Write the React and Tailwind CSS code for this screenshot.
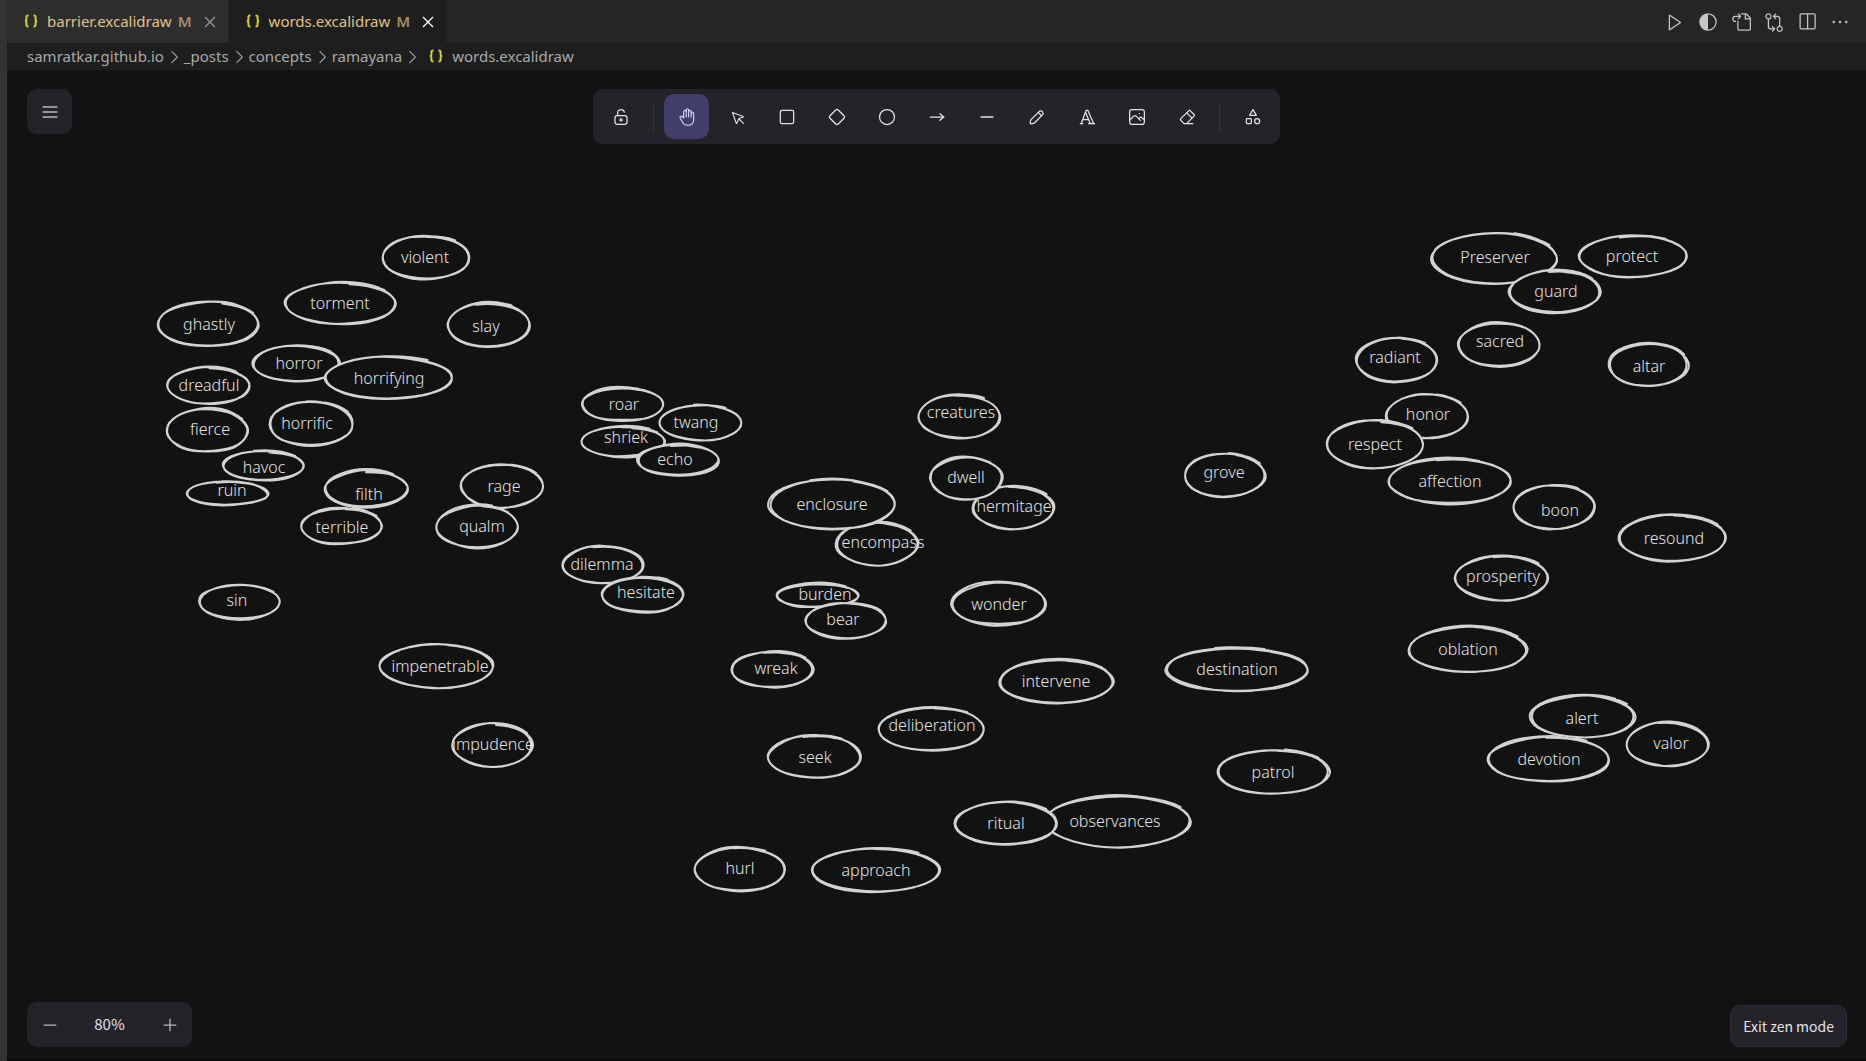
import {
  VscChevronRight,
  VscClose,
  VscColorMode,
  VscEllipsis,
  VscGitCompare,
  VscGoToFile,
  VscPlay,
  VscSplitHorizontal,
} from "react-icons/vsc";

// Position of the canvas' top-left corner in scene coordinates.
const ORIGIN = { x: 7, y: 70 };

// word, left, right, top, bottom of its ellipse, then the label's centre
const WORDS = [
  ["violent", 382, 469, 236, 279, 425, 257],
  ["torment", 285, 396, 283, 324, 340, 303],
  ["ghastly", 158, 259, 302, 346, 209, 324],
  ["slay", 447, 529, 303, 347, 486, 326],
  ["horror", 253, 339, 346, 382, 299, 363],
  ["horrifying", 325, 452, 357, 399, 389, 378],
  ["dreadful", 167, 249, 368, 404, 209, 385],
  ["fierce", 167, 248, 409, 452, 210, 429],
  ["horrific", 270, 353, 402, 446, 307, 423],
  ["havoc", 223, 304, 451, 480, 264, 467],
  ["ruin", 187, 268, 482, 505, 232, 490],
  ["filth", 325, 407, 471, 507, 369, 494],
  ["terrible", 301, 382, 508, 544, 342, 527],
  ["rage", 461, 543, 465, 508, 504, 486],
  ["qualm", 436, 517, 506, 548, 482, 526],
  ["dilemma", 562, 643, 547, 584, 602, 564],
  ["hesitate", 602, 684, 577, 612, 646, 592],
  ["sin", 199, 280, 585, 619, 237, 600],
  ["impenetrable", 380, 494, 645, 688, 440, 666],
  ["impudence", 452, 532, 724, 766, 493, 744],
  ["roar", 582, 664, 388, 421, 624, 404],
  ["twang", 660, 741, 405, 440, 696, 422],
  ["shriek", 581, 664, 427, 457, 626, 437],
  ["echo", 638, 719, 445, 475, 675, 459],
  ["encompass", 836, 918, 523, 565, 883, 542],
  ["enclosure", 769, 895, 480, 529, 832, 504],
  ["creatures", 919, 1001, 395, 438, 961, 412],
  ["hermitage", 973, 1054, 487, 529, 1014, 506],
  ["dwell", 930, 1002, 457, 499, 966, 477],
  ["burden", 777, 858, 584, 607, 825, 594],
  ["bear", 805, 886, 603, 638, 843, 619],
  ["wonder", 952, 1046, 583, 625, 999, 604],
  ["wreak", 731, 813, 652, 688, 776, 668],
  ["seek", 768, 860, 736, 778, 815, 757],
  ["deliberation", 879, 985, 708, 751, 932, 725],
  ["intervene", 1000, 1113, 660, 703, 1056, 681],
  ["observances", 1045, 1190, 796, 847, 1115, 821],
  ["ritual", 955, 1057, 802, 844, 1006, 823],
  ["hurl", 695, 785, 848, 891, 740, 868],
  ["approach", 812, 940, 849, 892, 876, 870],
  ["grove", 1184, 1265, 454, 497, 1224, 472],
  ["honor", 1386, 1468, 395, 438, 1428, 414],
  ["respect", 1327, 1424, 421, 468, 1375, 444],
  ["affection", 1389, 1511, 459, 504, 1450, 481],
  ["boon", 1513, 1594, 485, 529, 1560, 510],
  ["resound", 1619, 1726, 515, 561, 1674, 538],
  ["prosperity", 1455, 1548, 556, 600, 1503, 576],
  ["oblation", 1409, 1527, 627, 672, 1468, 649],
  ["destination", 1166, 1308, 648, 691, 1237, 669],
  ["devotion", 1488, 1609, 737, 782, 1549, 759],
  ["alert", 1531, 1635, 696, 738, 1582, 718],
  ["valor", 1627, 1708, 723, 766, 1671, 743],
  ["patrol", 1217, 1329, 750, 794, 1273, 772],
  ["Preserver", 1432, 1557, 233, 283, 1495, 257],
  ["protect", 1579, 1687, 236, 277, 1632, 256],
  ["guard", 1510, 1600, 271, 313, 1556, 291],
  ["sacred", 1458, 1540, 323, 366, 1500, 341],
  ["radiant", 1356, 1437, 338, 382, 1395, 357],
  ["altar", 1609, 1688, 344, 386, 1649, 366],
];

const PAD = 6;

function seeded(seed) {
  let s = seed * 7919 + 17;
  return () => {
    s = (s * 48271) % 2147483647;
    return s / 2147483647;
  };
}

// One hand-drawn pass round an ellipse that starts near the top and overshoots its start.
function sketchPass(rand, cx, cy, rx, ry) {
  const jitter = (amount) => (rand() - 0.5) * 2 * amount;
  const steps = 9;
  const start = -Math.PI / 2 + jitter(0.35);
  const points = [];
  const dx = jitter(0.6);
  const dy = jitter(0.5);
  for (let i = -1; i <= steps + 2; i++) {
    const angle = start + (i * 2 * Math.PI) / steps;
    const swell = i >= steps ? 1.03 : 1;
    points.push([
      cx + dx + Math.cos(angle) * (rx * swell + jitter(1)),
      cy + dy + Math.sin(angle) * (ry * swell + jitter(1)),
    ]);
  }
  const f = (n) => n.toFixed(2);
  let d = `M${f(points[1][0])} ${f(points[1][1])}`;
  for (let i = 1; i < points.length - 2; i++) {
    const [p0, p1, p2, p3] = points.slice(i - 1, i + 3);
    d += `C${f(p1[0] + (p2[0] - p0[0]) / 6)} ${f(p1[1] + (p2[1] - p0[1]) / 6)} ${f(p2[0] - (p3[0] - p1[0]) / 6)} ${f(p2[1] - (p3[1] - p1[1]) / 6)} ${f(p2[0])} ${f(p2[1])}`;
  }
  return d;
}

function WordNode({ word, index }) {
  const [text, left, right, top, bottom, tx, ty] = word;
  const w = right - left;
  const h = bottom - top;
  const rand = seeded(index + 3);
  const cx = w / 2 + PAD;
  const cy = h / 2 + PAD;
  const first = sketchPass(rand, cx, cy, w / 2, h / 2);
  const second = sketchPass(rand, cx, cy, w / 2, h / 2);
  return (
    <li>
      <svg
        className="absolute"
        aria-hidden="true"
        width={w + PAD * 2}
        height={h + PAD * 2}
        style={{ left: left - ORIGIN.x - PAD, top: top - ORIGIN.y - PAD }}
      >
        <ellipse cx={cx} cy={cy} rx={w / 2} ry={h / 2} fill="#121212" />
        <path d={first + second} fill="none" stroke="#d3d3d3" strokeWidth="2" strokeLinecap="round" />
      </svg>
      <span
        className="absolute -translate-x-1/2 -translate-y-1/2 whitespace-nowrap leading-5"
        style={{ left: tx - ORIGIN.x, top: ty - ORIGIN.y }}
      >
        {text}
      </span>
    </li>
  );
}

function Braces() {
  return (
    <svg className="h-4 w-4 shrink-0" viewBox="0 0 16 16" fill="none" stroke="#cbcb41" strokeWidth="2" aria-hidden="true">
      <path d="M5.5 1.5H5C3.8 1.5 3.4 2.2 3.4 3.2V5.4C3.4 6.4 3 7 1.8 7C3 7 3.4 7.7 3.4 8.7V10.8C3.4 11.9 3.8 12.5 5 12.5H5.5" />
      <path d="M10.5 1.5H11C12.2 1.5 12.6 2.2 12.6 3.2V5.4C12.6 6.4 13 7 14.2 7C13 7 12.6 7.7 12.6 8.7V10.8C12.6 11.9 12.2 12.5 11 12.5H10.5" />
    </svg>
  );
}

function Tab({ name, active }) {
  return (
    <div
      className={
        active
          ? "flex items-center bg-[#1e1e1e] pl-4 pr-2"
          : "mr-px flex items-center bg-[#2d2d2d] pl-4 pr-2"
      }
    >
      <button type="button" role="tab" aria-selected={active} className="flex items-center">
        <Braces />
        <span className="ml-2 text-[#e2c08d]">{name}</span>
        <span className="ml-1.5 font-semibold text-[#a58d69]">M</span>
      </button>
      <button
        type="button"
        aria-label={`Close ${name}`}
        className={active ? "ml-2 text-white" : "ml-2 text-[#969696]"}
      >
        <VscClose className="h-5 w-5" />
      </button>
    </div>
  );
}

const ACTIONS = [
  ["Run", VscPlay],
  ["Toggle theme", VscColorMode],
  ["Open file", VscGoToFile],
  ["Compare changes", VscGitCompare],
  ["Split editor", VscSplitHorizontal],
  ["More actions", VscEllipsis],
];

const CRUMBS = ["samratkar.github.io", "_posts", "concepts", "ramayana"];

function ToolIcon({ box = 24, stroke = 1.5, paths }) {
  return (
    <svg
      className="h-5 w-5"
      viewBox={`0 0 ${box} ${box}`}
      fill="none"
      stroke="currentColor"
      strokeWidth={stroke}
      strokeLinecap="round"
      strokeLinejoin="round"
      aria-hidden="true"
    >
      {paths.map((d) => (
        <path key={d} d={d} />
      ))}
    </svg>
  );
}

const LOCK = {
  label: "Keep selected tool active",
  box: 20,
  stroke: 1.25,
  paths: [
    "M13.542 8.542H6.458a2.5 2.5 0 0 0-2.5 2.5v3.75a2.5 2.5 0 0 0 2.5 2.5h7.084a2.5 2.5 0 0 0 2.5-2.5v-3.75a2.5 2.5 0 0 0-2.5-2.5Z",
    "M10 13.958a1.042 1.042 0 1 0 0-2.083 1.042 1.042 0 0 0 0 2.083Z",
    "M6.667 8.333V5.417C6.667 3.806 8.159 2.5 10 2.5c1.7 0 3.1 1.1 3.333 2.6",
  ],
};

const TOOLS = [
  {
    label: "Hand",
    active: true,
    stroke: 1.25,
    paths: [
      "M8 13v-7.5a1.5 1.5 0 0 1 3 0v6.5",
      "M11 5.5v-2a1.5 1.5 0 1 1 3 0v8.5",
      "M14 5.5a1.5 1.5 0 0 1 3 0v6.5",
      "M17 7.5a1.5 1.5 0 0 1 3 0v8.5a6 6 0 0 1 -6 6h-2h.208a6 6 0 0 1 -5.012 -2.7a69.74 69.74 0 0 1 -.196 -.3c-.312 -.479 -1.407 -2.388 -3.286 -5.728a1.5 1.5 0 0 1 .536 -2.022a1.867 1.867 0 0 1 2.28 .28l1.47 1.47",
    ],
  },
  {
    label: "Selection",
    box: 22,
    stroke: 1.25,
    paths: [
      "M6 6l4.153 11.793a0.365 .365 0 0 0 .331 .207a0.366 .366 0 0 0 .332 -.207l2.184 -4.793l4.787 -1.994a0.355 .355 0 0 0 .213 -.323a0.355 .355 0 0 0 -.213 -.323l-11.787 -4.36z",
      "M13.5 13.5l4.5 4.5",
    ],
  },
  {
    label: "Rectangle",
    paths: ["M6 4h12a2 2 0 0 1 2 2v12a2 2 0 0 1 -2 2h-12a2 2 0 0 1 -2 -2v-12a2 2 0 0 1 2 -2z"],
  },
  {
    label: "Diamond",
    paths: [
      "M10.5 20.4l-6.9 -6.9c-.781 -.781 -.781 -2.219 0 -3l6.9 -6.9c.781 -.781 2.219 -.781 3 0l6.9 6.9c.781 .781 .781 2.219 0 3l-6.9 6.9c-.781 .781 -2.219 .781 -3 0z",
    ],
  },
  { label: "Ellipse", paths: ["M12 3a9 9 0 1 1 0 18a9 9 0 1 1 0 -18z"] },
  { label: "Arrow", paths: ["M4 12h16", "M15.5 16l4.5 -4", "M15.5 8l4.5 4"] },
  { label: "Line", box: 20, paths: ["M4.167 10h11.666"] },
  {
    label: "Draw",
    box: 20,
    stroke: 1.25,
    paths: [
      "m7.643 15.69 7.774-7.773a2.357 2.357 0 1 0-3.334-3.334L4.31 12.357a3.333 3.333 0 0 0-.977 2.357v1.953h1.953c.884 0 1.732-.352 2.357-.977Z",
      "m11.25 5.417 3.333 3.333",
    ],
  },
  {
    label: "Text",
    paths: ["M4 20h3", "M14 20h7", "M6.9 15h6.9", "M10.2 6.3l5.8 13.7", "M5 20l6 -16h2l7 16"],
  },
  {
    label: "Insert image",
    box: 20,
    stroke: 1.25,
    paths: [
      "M12.5 6.667h.01",
      "M4.91 2.625h10.18a2.284 2.284 0 0 1 2.285 2.284v10.182a2.284 2.284 0 0 1-2.284 2.284H4.909a2.284 2.284 0 0 1-2.284-2.284V4.909a2.284 2.284 0 0 1 2.284-2.284Z",
      "m3.333 12.5 3.334-3.333c.773-.745 1.726-.745 2.5 0l4.166 4.166",
      "m11.667 11.667.833-.834c.774-.744 1.726-.744 2.5 0l1.667 1.667",
    ],
  },
  {
    label: "Eraser",
    paths: [
      "M19 20h-10.5l-4.21 -4.3a1 1 0 0 1 0 -1.41l10 -10a1 1 0 0 1 1.41 0l5 5a1 1 0 0 1 0 1.41l-9.2 9.3",
      "M18 13.3l-6.3 -6.3",
    ],
  },
];

const MORE = {
  label: "More tools",
  paths: [
    "M12 3l-4 7h8z",
    "M14 17a3 3 0 1 0 6 0a3 3 0 1 0 -6 0",
    "M4 15a1 1 0 0 1 1 -1h4a1 1 0 0 1 1 1v4a1 1 0 0 1 -1 1h-4a1 1 0 0 1 -1 -1z",
  ],
};

function ToolButton({ tool }) {
  return (
    <button
      type="button"
      aria-label={tool.label}
      aria-pressed={Boolean(tool.active)}
      className={
        tool.active
          ? "flex h-[45px] w-[45px] items-center justify-center rounded-[10px] bg-[#403e6a] text-[#e0dfff]"
          : "flex h-[45px] w-[45px] items-center justify-center rounded-[10px] text-[#e3e3e8]"
      }
    >
      <ToolIcon box={tool.box} stroke={tool.stroke} paths={tool.paths} />
    </button>
  );
}

function Divider() {
  return <div className="mx-[5px] h-[30px] w-px bg-[#34333f]" />;
}

export default function App() {
  return (
    <div className="flex min-h-screen bg-[#121212] font-['Noto_Sans',sans-serif] text-[15px]">
      <div className="w-[7px] shrink-0 bg-[#333333]" />
      <div className="flex min-w-0 flex-1 flex-col">
        <header>
          <div className="flex h-[43px] items-stretch bg-[#252526]">
            <div role="tablist" className="flex">
              <Tab name="barrier.excalidraw" active={false} />
              <Tab name="words.excalidraw" active />
            </div>
            <div className="ml-auto flex items-center gap-[13px] pr-4 text-[#c5c5c5]">
              {ACTIONS.map(([label, Icon]) => (
                <button key={label} type="button" aria-label={label}>
                  <Icon className="h-5 w-5" />
                </button>
              ))}
            </div>
          </div>
          <nav aria-label="Breadcrumb" className="flex h-[27px] items-center bg-[#1e1e1e] pl-5 text-[#a9a9a9]">
            {CRUMBS.map((crumb) => (
              <span key={crumb} className="flex items-center">
                <a href="#">{crumb}</a>
                <VscChevronRight className="h-5 w-5" />
              </span>
            ))}
            <a href="#" className="ml-1.5 flex items-center gap-2">
              <Braces />
              words.excalidraw
            </a>
          </nav>
        </header>

        <main className="relative flex flex-1 flex-col justify-between overflow-hidden border-b-2 border-[#0a0a0a] bg-[#121212] font-['Noto_Sans_CJK_SC',sans-serif]">
          <ul className="absolute inset-0 font-['Noto_Sans',sans-serif] text-base font-light text-[#e3e3e3]">
            {WORDS.map((word, index) => (
              <WordNode key={word[0]} word={word} index={index} />
            ))}
          </ul>

          <div className="relative grid grid-cols-[1fr_auto_1fr] items-start px-5 pt-[19px]">
            <button
              type="button"
              aria-label="Menu"
              className="flex h-[45px] w-[45px] items-center justify-center rounded-[10px] bg-[#232329] text-[#b8b8bd]"
            >
              <svg className="h-5 w-5" viewBox="0 0 20 20" stroke="currentColor" strokeWidth="1.5" aria-hidden="true">
                <path d="M2.5 5h15M2.5 10h15M2.5 15h15" />
              </svg>
            </button>
            <div role="toolbar" aria-label="Shapes" className="flex items-center gap-[5px] rounded-[10px] bg-[#232329] p-[5px]">
              <ToolButton tool={LOCK} />
              <Divider />
              {TOOLS.map((tool) => (
                <ToolButton key={tool.label} tool={tool} />
              ))}
              <Divider />
              <ToolButton tool={MORE} />
            </div>
          </div>

          <div className="relative flex items-end justify-between pb-3 pl-5 pr-[19px]">
            <div className="flex h-[45px] items-center rounded-[10px] bg-[#232329] text-[#e3e3e8]">
              <button type="button" aria-label="Zoom out" className="flex h-[45px] w-[45px] items-center justify-center text-[#b8b8bd]">
                <ToolIcon box={20} stroke={1.25} paths={["M4.167 10h11.666"]} />
              </button>
              <button type="button" aria-label="Reset zoom" className="w-[75px] text-center">
                80%
              </button>
              <button type="button" aria-label="Zoom in" className="flex h-[45px] w-[45px] items-center justify-center text-[#b8b8bd]">
                <ToolIcon box={20} stroke={1.25} paths={["M4.167 10h11.666", "M10 4.167v11.666"]} />
              </button>
            </div>
            <button
              type="button"
              className="h-[42px] rounded-[10px] border border-[#2e2d39] bg-[#232329] px-3 text-sm text-[#e3e3e8]"
            >
              Exit zen mode
            </button>
          </div>
        </main>
      </div>
    </div>
  );
}
